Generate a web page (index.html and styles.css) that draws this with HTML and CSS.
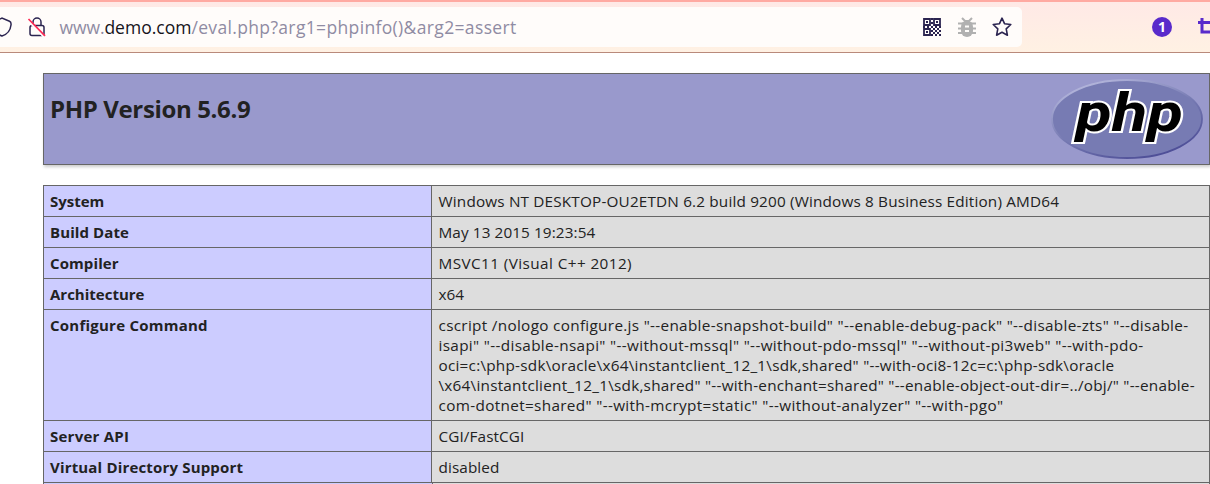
FILE: index.html
```html
<!DOCTYPE html>
<html lang="en">
<head>
<meta charset="utf-8">
<title>phpinfo()</title>
<link rel="stylesheet" href="styles.css">
</head>
<body>
<header class="toolbar">
  <div class="urlbar">
    <svg class="shield" width="12" height="22" viewBox="0 0 12 22"><path d="M-6 6 L2 2 L9.500 5.200 Q11.400 6 11 9 Q10 17.500 2 20 Q-6 17 -6 6Z" fill="none" stroke="#2b2450" stroke-width="1.500"/></svg>
    <svg class="lock" width="20" height="22" viewBox="0 0 20 22"><g fill="none" stroke="#2b2450" stroke-width="1.500"><path d="M6 9V6a4 4 0 0 1 8 0v3"/><rect x="3" y="9.500" width="14" height="10" rx="2"/></g><path d="M1.500 5L16.500 20.500" stroke="#fffdfb" stroke-width="2"/><path d="M1.500 3L18 19.800" stroke="#ff2a55" stroke-width="1.700"/></svg>
    <div class="url"><span class="host">www.</span><span class="domain">demo.com</span><span class="path">/eval.php?arg1=phpinfo()&amp;arg2=assert</span></div>
    <div class="actions">
      <svg class="qr" width="18" height="18" viewBox="0 0 18 18" fill="none" stroke="#2b2450" stroke-width="1.800"><path d="M1 1h6v6H1zM11 1h6v6h-6zM1 11h6v6H1z"/><path stroke-width="2" d="M3 4h2M13 4h2M3 14h2M8 1h2M8 5h2M0 9h2M4 9h2M8 9h2M12 9h2M16 9h2M10 11h2M14 11h2M8 13h2M12 13h2M16 13h2M10 15h2M14 15h2M8 17h2M12 17h2M16 17h2"/></svg>
      <svg width="18" height="20" viewBox="0 0 18 20"><path d="M4 1l3 3h4l3-3M0 6.500h18M0 11.500h18M0 16h18" fill="none" stroke="#b1b1b1" stroke-width="2"/><rect x="3" y="3.500" width="12" height="16.500" rx="6" fill="#b1b1b1"/><path d="M7 9.500h4M7 14h4" stroke="#fffdfb" stroke-width="2"/></svg>
      <svg width="20" height="20" viewBox="0 0 20 20"><path d="M10 1.200l2.500 5.500 6.300.8-4.600 4.300 1.200 6.400-5.400-3-5.400 3 1.200-6.400L1.200 7.500l6.300-.8z" fill="none" stroke="#2b2450" stroke-width="1.600" stroke-linejoin="round"/></svg>
    </div>
  </div>
  <div class="extensions">
    <span class="badge">1</span>
    <svg width="12" height="18" viewBox="0 0 12 18"><path d="M0 4.500h15M4 0v14H15" fill="none" stroke="#592acb" stroke-width="3"/></svg>
  </div>
</header>
<main class="page">
  <section class="banner">
    <h1>PHP Version 5.6.9</h1>
    <svg class="logo" width="152" height="82" viewBox="0 0 152 82">
      <defs><linearGradient id="rim" x1=".2" y1="0" x2=".8" y2="1"><stop offset="0" stop-color="#b9bbdf"/><stop offset=".5" stop-color="#777bb3"/><stop offset="1" stop-color="#484893"/></linearGradient></defs>
      <ellipse cx="75" cy="41" rx="75" ry="39" fill="#777bb3" stroke="url(#rim)" stroke-width="1.800"/>
      <text class="wordmark" x="24" y="53" textLength="107" lengthAdjust="spacingAndGlyphs">php</text>
    </svg>
  </section>
  <table class="info">
    <tr><th><span>System</span></th><td><span class="ls-2">Windows NT DESKTOP-OU2ETDN 6.2 build 9200 (Windows 8 Business Edition) AMD64</span></td></tr>
    <tr><th><span class="ls-1">Build Date</span></th><td><span class="ls-1">May 13 2015 19:23:54</span></td></tr>
    <tr><th><span class="ls-1">Compiler</span></th><td><span class="ls-6">MSVC11 (Visual C++ 2012)</span></td></tr>
    <tr><th><span>Architecture</span></th><td><span>x64</span></td></tr>
    <tr><th><span class="ls-3">Configure Command</span></th><td><span class="ls-4">cscript /nologo configure.js "--enable-snapshot-build" "--enable-debug-pack" "--disable-zts" "--disable-</span><br><span class="ls-5">isapi" "--disable-nsapi" "--without-mssql" "--without-pdo-mssql" "--without-pi3web" "--with-pdo-</span><br><span class="ls-3">oci=c:\php-sdk\oracle\x64\instantclient_12_1\sdk,shared" "--with-oci8-12c=c:\php-sdk\oracle</span><br><span class="ls-3">\x64\instantclient_12_1\sdk,shared" "--with-enchant=shared" "--enable-object-out-dir=../obj/" "--enable-</span><br><span class="ls-5">com-dotnet=shared" "--with-mcrypt=static" "--without-analyzer" "--with-pgo"</span></td></tr>
    <tr><th><span class="ls-3">Server API</span></th><td><span class="ls-1">CGI/FastCGI</span></td></tr>
    <tr><th><span class="ls-2">Virtual Directory Support</span></th><td><span class="ls-1">disabled</span></td></tr>
  </table>
  <div class="next-row"><span></span><span></span></div>
</main>
</body>
</html>
```
FILE: styles.css
```css
* { box-sizing: border-box; }
body { margin: 0; height: 484px; overflow: hidden; background: #fff; color: #222; font-family: "Open Sans", "Noto Sans", sans-serif; }
.toolbar { display: flex; height: 53px; padding-top: 5px; border-top: 2px solid #ffaaa2; border-bottom: 1px solid #b98a7b; background: linear-gradient(#ffe9e6, #fff1e3); }
.urlbar { display: flex; align-items: center; width: 1022px; height: 40px; padding-right: 10px; border-radius: 0 5px 5px 0; background: #fffcfa; }
.shield { margin-right: 15px; }
.url { margin-left: 12.500px; color: #8f8ba3; font-size: 17.500px; white-space: nowrap; }
.host { letter-spacing: -0.1px; }
.domain { color: #15141a; }
.path { letter-spacing: 0.35px; }
.actions { display: flex; align-items: center; gap: 16px; margin-left: auto; }
.qr { margin-right: 1px; }
.extensions { display: flex; align-items: center; flex: 1; height: 40px; justify-content: flex-end; gap: 26px; overflow: hidden; }
.badge { width: 20px; height: 20px; border-radius: 50%; background: #592acb; color: #fff; font-size: 14px; font-weight: 700; line-height: 20px; text-align: center; }
.page { height: 431px; overflow: hidden; padding: 20px 0 0 43px; }
.banner { display: flex; justify-content: space-between; height: 92px; padding: 4px 5px 0 6px; border: 1px solid #666; background: #99c; box-shadow: 1px 2px 3px #ccc; }
.logo { overflow: visible; }
h1 { margin: 13px 0 0; font-size: 24px; line-height: 36px; letter-spacing: -0.36px; white-space: nowrap; }
.wordmark { font: italic 700 54px Roboto, sans-serif; fill: #000; stroke: #fff; stroke-width: 4px; paint-order: stroke; }
.info { width: 1167px; margin-top: 20px; border-collapse: collapse; table-layout: fixed; font-size: 15px; line-height: 20px; }
.info th, .info td { height: 31px; padding: 5px 6px; border: 1px solid #666; text-align: left; vertical-align: top; white-space: nowrap; }
.info th { width: 388px; background: #ccf; }
.info td { padding-left: 6.500px; background: #ddd; font-size: 15.300px; }
.ls-1 { letter-spacing: 0.1px; }
.ls-2 { letter-spacing: 0.17px; }
.ls-3 { letter-spacing: 0.24px; }
.ls-4 { letter-spacing: 0.31px; }
.ls-5 { letter-spacing: 0.34px; }
.ls-6 { letter-spacing: 0.42px; }
.next-row { display: grid; grid-template-columns: 389px 1fr; height: 1px; }
.next-row span { border: solid #666; border-width: 0 0 0 1px; background: #ccf; }
.next-row span:last-child { border-right-width: 1px; background: #ddd; }
```
